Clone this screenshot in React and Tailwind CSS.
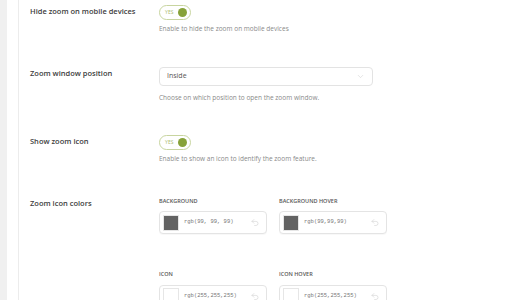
import React from 'react';
import { Undo2, ChevronDown } from 'lucide-react';

const Toggle = () => (
    <div className="w-[32px] h-[15px] rounded-full border border-[#c8d5a0] bg-white flex items-center justify-between pl-[5px] pr-[3px]">
        <span className="text-[5px] leading-none text-[#a9bb72] tracking-wide">YES</span>
        <span className="w-[9px] h-[9px] rounded-full bg-[#87a23a]" />
    </div>
);

const ColorField = ({ label, swatch, value }) => (
    <div className="w-[108px]">
        <div className="text-[5.5px] font-semibold uppercase text-[#555] leading-none mb-[7px]">{label}</div>
        <div className="h-[23px] rounded-[4px] border border-[#e4e4e4] bg-white flex items-center pl-[3px] pr-[6px] shadow-[0_1px_1px_rgba(0,0,0,0.03)]">
            <span className="w-[16px] h-[16px] border border-[#e6e6e6]" style={{ backgroundColor: swatch }} />
            <span className="ml-[5px] flex-1 text-[5.5px] text-[#777] font-['Liberation_Mono',monospace]">{value}</span>
            <Undo2 className="w-[10px] h-[9px] text-[#cfcfcf]" strokeWidth={1.5} />
        </div>
    </div>
);

const Row = ({ label, children }) => (
    <div className="flex py-[17px]">
        <div className="w-[129px] shrink-0 text-[7.5px] font-semibold text-[#3d3d3d] leading-[12px]">{label}</div>
        <div className="flex-1">{children}</div>
    </div>
);

const Desc = ({ children }) => (
    <div className="text-[6.5px] text-[#8a8a8a] leading-none">{children}</div>
);

export default function App() {
    return (
        <div className="w-[510px] h-[300px] overflow-hidden bg-white flex font-['Open_Sans',sans-serif]">
            <div className="w-[7px] bg-[#f0f0f0] shrink-0" />
            <div className="ml-[11px] flex-1 border-l border-[#ececec] pl-[11px] -mt-[12px]">
                <Row label="Hide zoom on mobile devices">
                    <Toggle />
                    <div className="mt-[6px]"><Desc>Enable to hide the zoom on mobile devices</Desc></div>
                </Row>
                <Row label="Zoom window position">
                    <div className="w-[214px] h-[19px] rounded-[4px] border border-[#e3e3e3] flex items-center justify-between pl-[7px] pr-[7px]">
                        <span className="text-[7px] text-[#555]">Inside</span>
                        <ChevronDown className="w-[9px] h-[9px] text-[#d0d0d0]" strokeWidth={1.5} />
                    </div>
                    <div className="mt-[9px]"><Desc>Choose on which position to open the zoom window.</Desc></div>
                </Row>
                <Row label="Show zoom icon">
                    <Toggle />
                    <div className="mt-[6px]"><Desc>Enable to show an icon to identify the zoom feature.</Desc></div>
                </Row>
                <Row label="Zoom icon colors">
                    <div className="grid grid-cols-[108px_108px] gap-x-[12px] gap-y-[38px] mt-[2px]">
                        <ColorField label="Background" swatch="rgb(99,99,99)" value="rgb(99, 99, 99)" />
                        <ColorField label="Background hover" swatch="rgb(99,99,99)" value="rgb(99,99,99)" />
                        <ColorField label="Icon" swatch="#ffffff" value="rgb(255,255,255)" />
                        <ColorField label="Icon hover" swatch="#ffffff" value="rgb(255,255,255)" />
                    </div>
                </Row>
            </div>
        </div>
    );
}
